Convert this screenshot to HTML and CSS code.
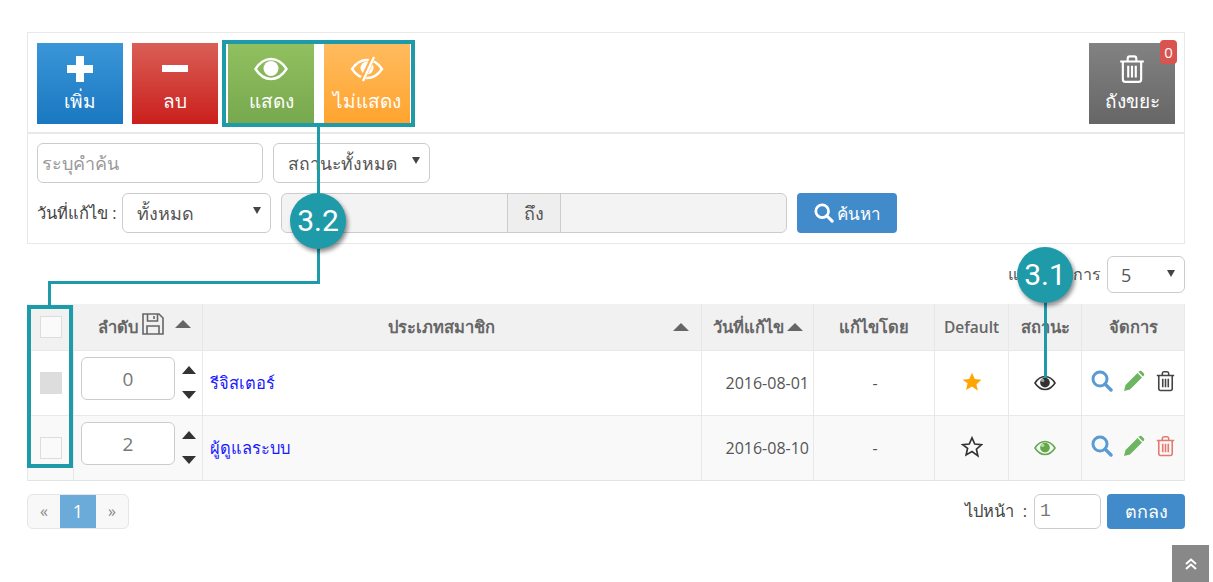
FILE: index.html
```html
<!DOCTYPE html>
<html lang="th">
<head>
<meta charset="utf-8">
<title>ประเภทสมาชิก</title>
<link rel="stylesheet" href="styles.css">
</head>
<body>
<svg class="defs" width="0" height="0" aria-hidden="true">
  <defs>
    <symbol id="i-eye" viewBox="0 0 34 24">
      <path d="M1.5 12C6 5 11 2 17 2s11 3 15.500 10C28 19 23 22 17 22S6 19 1.500 12Z" fill="none" stroke="currentColor" stroke-width="2.400"/>
      <circle cx="17" cy="11.500" r="7.500" fill="currentColor"/>
      <circle cx="13.500" cy="8" r="2.500" fill="#fff" fill-opacity=".55"/>
    </symbol>
    <symbol id="i-trash" viewBox="0 0 24 26">
      <path d="M1 6h22M8 6V3.500C8 2 9 1.300 10 1.300h4c1 0 2 .7 2 2.200V6M3.500 6v16.500c0 1.500 1 2.500 2.300 2.500h12.400c1.300 0 2.300-1 2.300-2.500V6M8.500 10v11M12 10v11M15.500 10v11" fill="none" stroke="currentColor" stroke-width="2"/>
    </symbol>
    <symbol id="i-search" viewBox="0 0 22 22">
      <circle cx="9" cy="9" r="7" fill="none" stroke="currentColor" stroke-width="3"/>
      <path d="M14 14l6 6" stroke="currentColor" stroke-width="3.400" stroke-linecap="round"/>
    </symbol>
    <symbol id="i-pencil" viewBox="0 0 22 22">
      <path d="M1 21l1.500-6L14.500 3l4.500 4.500L7 19.500ZM16 1.500c1-1 2-1 3 0l1.500 1.500c1 1 1 2 0 3L20 6.500 15.500 2Z" fill="currentColor"/>
    </symbol>
    <symbol id="i-star" viewBox="0 0 24 24">
      <path d="M12 2l3 6.800 7.300.7-5.500 4.900 1.600 7.200L12 17l-6.400 3.600 1.600-7.200L1.700 9.500 9 8.800Z"/>
    </symbol>
  </defs>
</svg>

<main class="page">
  <section class="panel">
    <div class="toolbar">
      <button class="tool tool-blue" type="button">
        <svg class="tool-icon" viewBox="0 0 28 28"><path d="M10 1h8v9h9v8h-9v9h-8v-9H1v-8h9Z" fill="#fff"/></svg>
        <span>เพิ่ม</span>
      </button>
      <button class="tool tool-red" type="button">
        <svg class="tool-icon" viewBox="0 0 28 28"><path d="M1 10h26v7H1Z" fill="#fff"/></svg>
        <span>ลบ</span>
      </button>
      <button class="tool tool-green" type="button">
        <svg class="tool-icon icon-eye-lg"><use href="#i-eye"/></svg>
        <span>แสดง</span>
      </button>
      <button class="tool tool-orange" type="button">
        <svg class="tool-icon icon-eye-lg" viewBox="0 0 34 28">
          <path d="M2 14C6 8 11 5 17 5s11 3 15 9c-4 6-9 9-15 9S6 20 2 14Z" fill="none" stroke="#fff" stroke-width="2.400"/>
          <circle cx="17" cy="13" r="6.500" fill="#fff"/>
          <path d="M23 2L12 26" stroke="#ffb04d" stroke-width="5"/>
          <path d="M24 2L13 26" stroke="#fff" stroke-width="2.400"/>
        </svg>
        <span>ไม่แสดง</span>
      </button>
      <button class="tool tool-gray" type="button">
        <svg class="tool-icon icon-trash-lg"><use href="#i-trash"/></svg>
        <span>ถังขยะ</span>
        <b class="badge">0</b>
      </button>
    </div>
    <div class="filters">
      <div class="filter-row">
        <input class="field field-keyword" type="text" placeholder="ระบุคำค้น">
        <div class="select-box select-status"><select class="field"><option>สถานะทั้งหมด</option></select></div>
      </div>
      <div class="filter-row">
        <label class="filter-label">วันที่แก้ไข :</label>
        <div class="select-box select-date"><select class="field"><option>ทั้งหมด</option></select></div>
        <div class="date-group">
          <div class="date-cell date-from"></div>
          <div class="date-to">ถึง</div>
          <div class="date-cell date-end"></div>
        </div>
        <button class="btn btn-search" type="button">
          <svg class="search-icon"><use href="#i-search"/></svg>ค้นหา
        </button>
      </div>
    </div>
  </section>

  <div class="perpage">
    <span>แสดงรายการ</span>
    <div class="select-box select-perpage"><select class="field"><option>5</option></select></div>
  </div>

  <table class="grid">
    <colgroup>
      <col class="c-check"><col class="c-order"><col class="c-type"><col class="c-date">
      <col class="c-by"><col class="c-default"><col class="c-status"><col class="c-manage">
    </colgroup>
    <thead>
      <tr>
        <th><span class="check"></span></th>
        <th>
          <div class="th-order">ลำดับ
            <svg class="save-icon" viewBox="0 0 22 22"><path d="M1 1h16l4 4v16H1ZM5.500 1v7h10V1M12 3v3M5 21v-8h12v8" fill="none" stroke="currentColor" stroke-width="1.600"/></svg>
            <i class="sort-up"></i>
          </div>
        </th>
        <th><div class="th-type"><span>ประเภทสมาชิก</span><i class="sort-up"></i></div></th>
        <th><div class="th-date">วันที่แก้ไข<i class="sort-up"></i></div></th>
        <th>แก้ไขโดย</th>
        <th class="th-latin">Default</th>
        <th>สถานะ</th>
        <th>จัดการ</th>
      </tr>
    </thead>
    <tbody>
      <tr>
        <td><span class="check check-on"></span></td>
        <td>
          <div class="order">
            <input class="field order-input" type="text" value="0">
            <div class="order-arrows"><i class="arrow-up"></i><i class="arrow-down"></i></div>
          </div>
        </td>
        <td class="cell-link"><a href="#">รีจิสเตอร์</a></td>
        <td class="cell-date">2016-08-01</td>
        <td class="cell-center cell-dash">-</td>
        <td class="cell-center"><svg class="star star-on"><use href="#i-star"/></svg></td>
        <td class="cell-center"><svg class="eye eye-dark"><use href="#i-eye"/></svg></td>
        <td>
          <div class="actions">
            <svg class="act act-search"><use href="#i-search"/></svg>
            <svg class="act act-pencil"><use href="#i-pencil"/></svg>
            <svg class="act act-trash"><use href="#i-trash"/></svg>
          </div>
        </td>
      </tr>
      <tr class="row-alt">
        <td><span class="check"></span></td>
        <td>
          <div class="order">
            <input class="field order-input" type="text" value="2">
            <div class="order-arrows"><i class="arrow-up"></i><i class="arrow-down"></i></div>
          </div>
        </td>
        <td class="cell-link"><a href="#">ผู้ดูแลระบบ</a></td>
        <td class="cell-date">2016-08-10</td>
        <td class="cell-center cell-dash">-</td>
        <td class="cell-center"><svg class="star star-off"><use href="#i-star"/></svg></td>
        <td class="cell-center"><svg class="eye eye-green"><use href="#i-eye"/></svg></td>
        <td>
          <div class="actions">
            <svg class="act act-search"><use href="#i-search"/></svg>
            <svg class="act act-pencil"><use href="#i-pencil"/></svg>
            <svg class="act act-trash-red"><use href="#i-trash"/></svg>
          </div>
        </td>
      </tr>
    </tbody>
  </table>

  <div class="footer-row">
    <nav class="pager">
      <a href="#">«</a><a class="active" href="#">1</a><a href="#">»</a>
    </nav>
    <div class="goto">
      <span class="goto-label">ไปหน้า&nbsp; :</span>
      <input class="field goto-input" type="text" value="1">
      <button class="btn btn-go" type="button">ตกลง</button>
    </div>
  </div>
</main>

<div class="note note-box-tools"></div>
<div class="note note-box-check"></div>
<div class="note note-v1"></div>
<div class="note note-h"></div>
<div class="note note-v2"></div>
<div class="note note-v3"></div>
<div class="bubble bubble-32">3.2</div>
<div class="bubble bubble-31">3.1</div>

<a class="to-top" href="#">
  <svg viewBox="0 0 14 14" width="14" height="14"><path d="M2 7l5-4.500L12 7M2 12l5-4.500L12 12" fill="none" stroke="#fff" stroke-width="2"/></svg>
</a>
</body>
</html>
```

FILE: styles.css
```css
* { box-sizing: border-box; }
html, body { margin: 0; height: 582px; overflow: hidden; background: #fff; }
body {
  position: relative;
  font-family: "Open Sans", "Noto Sans", "Noto Sans CJK SC", sans-serif;
  font-size: 16px;
  color: #555;
}
.defs { position: absolute; }
.page { padding: 32px 28px 0 27px; }

.panel { border: 1px solid #e8e8e8; height: 212px; }
.toolbar {
  display: flex;
  height: 101px;
  padding: 10px 9px 0;
  border-bottom: 2px solid #e6eaea;
}
.tool {
  position: relative;
  width: 86px;
  height: 81px;
  padding: 12px 0 0;
  border: 0;
  display: flex;
  flex-direction: column;
  align-items: center;
  color: #fff;
  font: 19px/26px "Open Sans", "Noto Sans", sans-serif;
}
.tool-icon { width: 28px; height: 28px; display: block; margin-bottom: 5px; }
.icon-eye-lg { width: 34px; height: 28px; color: #fff; }
.icon-trash-lg { width: 26px; height: 28px; color: #fff; }
.tool-blue { background: linear-gradient(#3a96d7, #1a78c2); }
.tool-red { background: linear-gradient(#d95f56, #cb1f1c); margin-left: 9px; }
.tool-green { background: linear-gradient(#90c05f, #78a84e); margin-left: 10px; }
.tool-orange { background: linear-gradient(#ffbb5f, #ffa42e); margin-left: 10px; }
.tool-gray { background: linear-gradient(#828282, #666); margin-left: auto; }
.badge {
  position: absolute;
  top: -3px;
  right: -2px;
  width: 17px;
  height: 24px;
  border-radius: 4px;
  background: #d9534f;
  color: #fff;
  font: 400 15px/24px "Open Sans", sans-serif;
}

.filters { padding: 9px 9px 0; }
.filter-row { display: flex; align-items: center; margin-bottom: 10px; }
.field {
  height: 40px;
  border: 1px solid #ccc;
  border-radius: 6px;
  background: #fff;
  color: #555;
  font: 18px "Open Sans", "Noto Sans", sans-serif;
  outline: 0;
}
.field-keyword { width: 226px; padding: 0 4px; }
.field-keyword::placeholder { color: #999; opacity: 1; }
.select-box { position: relative; }
.select-box select {
  appearance: none;
  width: 100%;
  padding: 0 14px;
  display: block;
}
.select-box::after {
  content: "";
  position: absolute;
  right: 10px;
  top: 14px;
  border: 4px solid transparent;
  border-top: 7px solid #444;
  border-bottom: 0;
}
.select-status { width: 157px; margin-left: 10px; }
.select-status select { font-size: 17.500px; }
.select-date { width: 149px; }
.filter-label { width: 85px; font-size: 16.500px; color: #444; white-space: nowrap; }
.date-group {
  display: flex;
  width: 506px;
  height: 40px;
  margin-left: 10px;
  border: 1px solid #ccc;
  border-radius: 6px;
  background: #f3f3f3;
  overflow: hidden;
}
.date-from { width: 225px; }
.date-to {
  width: 54px;
  border: solid #ccc;
  border-width: 0 1px;
  background: #eee;
  text-align: center;
  line-height: 38px;
  font-size: 18px;
}
.date-end { flex: 1; }
.btn {
  height: 40px;
  border: 0;
  border-radius: 4px;
  background: #428bca;
  color: #fff;
  font: 17px "Open Sans", "Noto Sans", sans-serif;
}
.btn-search {
  width: 100px;
  margin-left: 10px;
  display: flex;
  align-items: center;
  justify-content: center;
  gap: 3px;
}
.search-icon { width: 20px; height: 20px; color: #fff; }

.perpage {
  display: flex;
  justify-content: flex-end;
  align-items: center;
  gap: 6px;
  height: 37px;
  margin-top: 12px;
}
.select-perpage { width: 78px; }
.select-perpage select { height: 37px; padding-left: 13px; }

.grid {
  width: 1157px;
  margin-top: 11px;
  table-layout: fixed;
  border-collapse: collapse;
  border-bottom: 1px solid #e0e4e4;
}
.c-check { width: 46px; }
.c-order { width: 129px; }
.c-type { width: 499px; }
.c-date { width: 112px; }
.c-by { width: 121px; }
.c-default { width: 74px; }
.c-status { width: 73px; }
.c-manage { width: 103px; }
.grid th, .grid td { padding: 0; border: 1px solid #e6e9e9; border-top: 0; border-bottom: 0; }
.grid th {
  height: 46px;
  background: #f1f1f1;
  font-weight: 600;
  font-size: 16.500px;
  color: #666;
  text-align: center;
}
.grid .th-latin { font-size: 15.500px; }
.grid td { height: 65px; border-top: 1px solid #e6e9e9; }
.row-alt td { background: #f9f9f9; }
.check {
  display: block;
  width: 22px;
  height: 22px;
  margin: 0 auto;
  border: 1px solid #ddd;
  background: #fafafa;
}
.check-on { background: #ddd; }
.th-order { display: flex; align-items: center; padding-left: 24px; }
.save-icon { width: 22px; height: 22px; margin: -6px 0 0 4px; color: #666; }
.sort-up {
  display: block;
  width: 0;
  border: 8px solid transparent;
  border-top: 0;
  border-bottom: 8px solid #666;
}
.th-order .sort-up { margin: -6px 0 0 11px; }
.th-type { display: flex; align-items: center; padding: 0 12px 0 185px; justify-content: space-between; }
.th-date { display: flex; align-items: center; justify-content: center; gap: 3px; }
.order { display: flex; align-items: center; padding-left: 7px; }
.order-input {
  width: 94px;
  height: 43px;
  margin-bottom: 8px;
  text-align: center;
  color: #777;
  font-size: 19px;
}
.order-arrows {
  display: flex;
  flex-direction: column;
  gap: 17px;
  margin-left: 7px;
}
.arrow-up, .arrow-down {
  display: block;
  width: 0;
  border: 7px solid transparent;
}
.arrow-up { border-top: 0; border-bottom: 8px solid #333; }
.arrow-down { border-bottom: 0; border-top: 8px solid #333; }
.cell-link { padding-left: 7px !important; padding-top: 1px !important; }
.cell-link a { color: #1a1aff; text-decoration: none; font-size: 16.500px; }
.cell-date { text-align: right; padding-right: 4px !important; font-size: 16px; }
.cell-center { text-align: center; }
.cell-dash { padding-left: 2px !important; }
.star, .eye { display: block; margin: 0 auto; }
.star { width: 22px; height: 22px; margin-top: -2px; }
.star-on { fill: #ffa500; }
.star-off { fill: none; stroke: #333; stroke-width: 1.800; }
.eye { width: 22px; height: 16px; }
.eye-dark { color: #333; }
.eye-green { color: #64a84c; }
.actions { display: flex; align-items: center; padding-left: 9px; gap: 11px; margin-top: -3px; }
.act { display: block; width: 22px; height: 22px; flex: none; }
.act-search { color: #5b9bd5; }
.act-pencil { color: #6eb561; margin-left: -1px; }
.act-trash, .act-trash-red { width: 19px; margin-left: 0; }
.act-trash { color: #444; }
.act-trash-red { color: #e8786c; }

.footer-row {
  display: flex;
  justify-content: space-between;
  align-items: flex-start;
  margin-top: 13px;
}
.pager {
  display: flex;
  height: 35px;
  border: 1px solid #e6e6e6;
  border-radius: 6px;
  background: #f8f8f8;
  overflow: hidden;
}
.pager a {
  width: 32px;
  text-align: center;
  line-height: 33px;
  color: #888;
  text-decoration: none;
}
.pager .active { width: 36px; background: #6aabd9; color: #fff; font-size: 18px; }
.goto { display: flex; align-items: center; }
.goto-label { color: #444; margin-right: 7px; font-size: 16.500px; }
.goto-input { width: 67px; height: 35px; padding: 0 5px; color: #777; font-family: "Liberation Mono", monospace; font-size: 18px; }
.btn-go { width: 78px; height: 35px; margin-left: 6px; font-size: 18px; }

.note { position: absolute; background: #1f9aa9; }
.note-box-tools, .note-box-check { background: none; border: 4px solid #1f9aa9; }
.note-box-tools { left: 222px; top: 40px; width: 193px; height: 87px; }
.note-box-check { left: 27px; top: 305px; width: 46px; height: 163px; }
.note-v1 { left: 317px; top: 127px; width: 3px; height: 157px; }
.note-h { left: 48px; top: 281px; width: 272px; height: 3px; }
.note-v2 { left: 48px; top: 281px; width: 3px; height: 25px; }
.note-v3 { left: 1044px; top: 296px; width: 3px; height: 82px; }
.bubble {
  position: absolute;
  width: 56px;
  height: 56px;
  border-radius: 50%;
  background: #1f9aa9;
  box-shadow: 2px 3px 4px rgba(0,0,0,.45);
  color: #fff;
  font: 30px/56px "Roboto", sans-serif;
  text-align: center;
}
.bubble-32 { left: 290px; top: 193px; }
.bubble-31 { left: 1017px; top: 247px; }
.to-top {
  position: absolute;
  left: 1172px;
  top: 545px;
  width: 37px;
  height: 37px;
  background: #888;
  display: flex;
  align-items: center;
  justify-content: center;
}
```
